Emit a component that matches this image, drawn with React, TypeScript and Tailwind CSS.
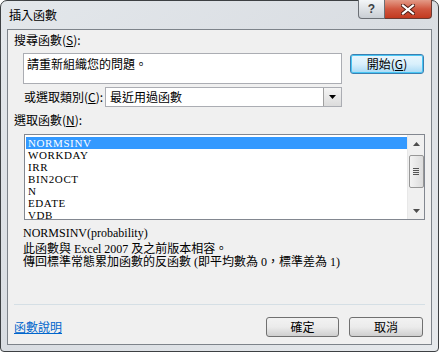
import React from "react";

const cjk = { fontFamily: '"Noto Sans CJK TC", "Noto Sans", sans-serif' };
const serif = { fontFamily: '"Liberation Serif", "Noto Sans CJK TC", serif' };

const items = ["NORMSINV", "WORKDAY", "IRR", "BIN2OCT", "N", "EDATE", "VDB"];

function Btn({ label, cls = "" }: { label: string; cls?: string }) {
  return (
    <div
      className={`h-[20px] flex items-center justify-center rounded-[3px] border border-[#707070] bg-gradient-to-b from-[#f2f2f2] via-[#ebebeb] to-[#cfcfcf] text-[12px] text-black leading-none ${cls}`}
      style={cjk}
    >
      {label}
    </div>
  );
}

export default function App() {
  return (
    <div className="w-[439px] h-[352px] bg-white">
      <div className="w-[439px] h-[352px] rounded-t-[7px] rounded-b-[4px] border border-[#3d4043] bg-gradient-to-br from-[#e3e7eb] via-[#d9dde2] to-[#e6e9ec] relative flex flex-col">
        {/* title bar */}
        <div className="h-[28px] flex items-center pl-[8px] text-[12px] text-black" style={cjk}>
          插入函數
        </div>
        <div className="absolute top-[-1px] right-[6px] flex">
          <div className="w-[27px] h-[19px] rounded-bl-[4px] border border-[#6b6f75] border-t-0 bg-gradient-to-b from-[#f4f6f8] to-[#c9ced4] flex items-center justify-center text-[12px] font-bold text-[#3a3e44]" style={{ fontFamily: '"Liberation Sans", sans-serif' }}>
            ?
          </div>
          <div className="w-[47px] h-[19px] rounded-br-[4px] border border-[#6b3a32] border-t-0 border-l-0 bg-gradient-to-b from-[#e39a87] via-[#d0563f] to-[#c2391f] flex items-center justify-center">
            <svg width="14" height="11" viewBox="0 0 14 11">
              <path d="M2 1.5 L12 9.5 M12 1.5 L2 9.5" stroke="#4a1a12" strokeWidth="4" strokeLinecap="square" />
              <path d="M2 1.5 L12 9.5 M12 1.5 L2 9.5" stroke="#ffffff" strokeWidth="2.2" strokeLinecap="square" />
            </svg>
          </div>
        </div>

        {/* client */}
        <div className="mx-[6px] h-[316px] border border-[#7d838a] bg-[#f0f0f0] flex flex-col text-[12px] text-black" style={cjk}>
          <div className="h-[16px] mt-[2px] ml-[6px] leading-[16px]">搜尋函數(<span className="underline">S</span>):</div>
          <div className="flex mt-[5px]">
            <div className="ml-[15px] w-[319px] h-[31px] border border-[#abadb3] bg-white pl-[3px] pt-[2px] leading-[16px]">
              請重新組織您的問題。
            </div>
            <div className="ml-[8px] mt-[1px] w-[74px] h-[20px] rounded-[3px] border border-[#3c7fb1] bg-gradient-to-b from-[#eaf6fd] via-[#d9f0fc] to-[#a7d9f5] flex items-center justify-center leading-none shadow-[inset_0_0_0_1px_#48c6f4]">
              開始(<span className="underline">G</span>)
            </div>
          </div>
          <div className="flex items-center mt-[3px] h-[20px]">
            <div className="ml-[16px] w-[81px] leading-[16px]">或選取類別(<span className="underline">C</span>):</div>
            <div className="w-[237px] h-[20px] border border-[#abadb3] bg-white flex">
              <div className="flex-1 pl-[4px] leading-[18px]">最近用過函數</div>
              <div className="w-[18px] h-[18px] border-l border-[#a0a0a0] bg-gradient-to-b from-[#f4f4f4] to-[#dcdcdc] flex items-center justify-center">
                <svg width="7" height="4" viewBox="0 0 7 4"><path d="M0 0 H7 L3.5 4 Z" fill="#000" /></svg>
              </div>
            </div>
          </div>
          <div className="h-[16px] mt-[5px] ml-[6px] leading-[16px]">選取函數(<span className="underline">N</span>):</div>
          <div className="ml-[16px] mt-[6px] w-[401px] h-[86px] border border-[#828790] bg-white flex">
            <div className="flex-1 pt-[2px] pl-[1px]" style={serif}>
              {items.map((t, i) => (
                <div
                  key={t}
                  className={`h-[12px] leading-[12px] pl-[2px] text-[11px] tracking-[0.6px] ${i === 0 ? "bg-[#3399ff] text-white" : "text-black"}`}
                >
                  {t}
                </div>
              ))}
            </div>
            <div className="w-[17px] h-full bg-[#f0f0f0] border-l border-[#e8e8e8] flex flex-col items-center">
              <div className="h-[17px] flex items-center justify-center">
                <svg width="7" height="4" viewBox="0 0 7 4"><path d="M0 4 H7 L3.5 0 Z" fill="#4d4d4d" /></svg>
              </div>
              <div className="mt-[3px] w-[15px] h-[33px] rounded-[2px] border border-[#979797] bg-gradient-to-r from-[#f3f3f3] to-[#dcdcdc] flex flex-col items-center justify-center gap-[1px]">
                <div className="w-[6px] h-[1px] bg-[#555]" />
                <div className="w-[6px] h-[1px] bg-[#555]" />
                <div className="w-[6px] h-[1px] bg-[#555]" />
                <div className="w-[6px] h-[1px] bg-[#555]" />
              </div>
              <div className="flex-1" />
              <div className="h-[17px] flex items-center justify-center">
                <svg width="7" height="4" viewBox="0 0 7 4"><path d="M0 0 H7 L3.5 4 Z" fill="#4d4d4d" /></svg>
              </div>
            </div>
          </div>
          <div className="ml-[15px] mt-[5px] h-[16px] leading-[16px] text-[12px]" style={serif}>NORMSINV(probability)</div>
          <div className="ml-[15px] mt-[2px] leading-[13px]" style={serif}>此函數與 Excel 2007 及之前版本相容。</div>
          <div className="ml-[15px] leading-[13px]" style={serif}>傳回標準常態累加函數的反函數 (即平均數為 0，標準差為 1)</div>
          <div className="flex-1" />
          <div className="mx-[6px] h-[1px] bg-[#d5dfe5]" />
          <div className="flex items-center mt-[12px] mb-[7px] h-[20px]">
            <div className="ml-[6px] text-[#0066cc] underline leading-[16px]">函數說明</div>
            <div className="flex-1" />
            <Btn label="確定" cls="w-[73px]" />
            <Btn label="取消" cls="w-[74px] ml-[10px] mr-[8px]" />
          </div>
        </div>
      </div>
    </div>
  );
}
